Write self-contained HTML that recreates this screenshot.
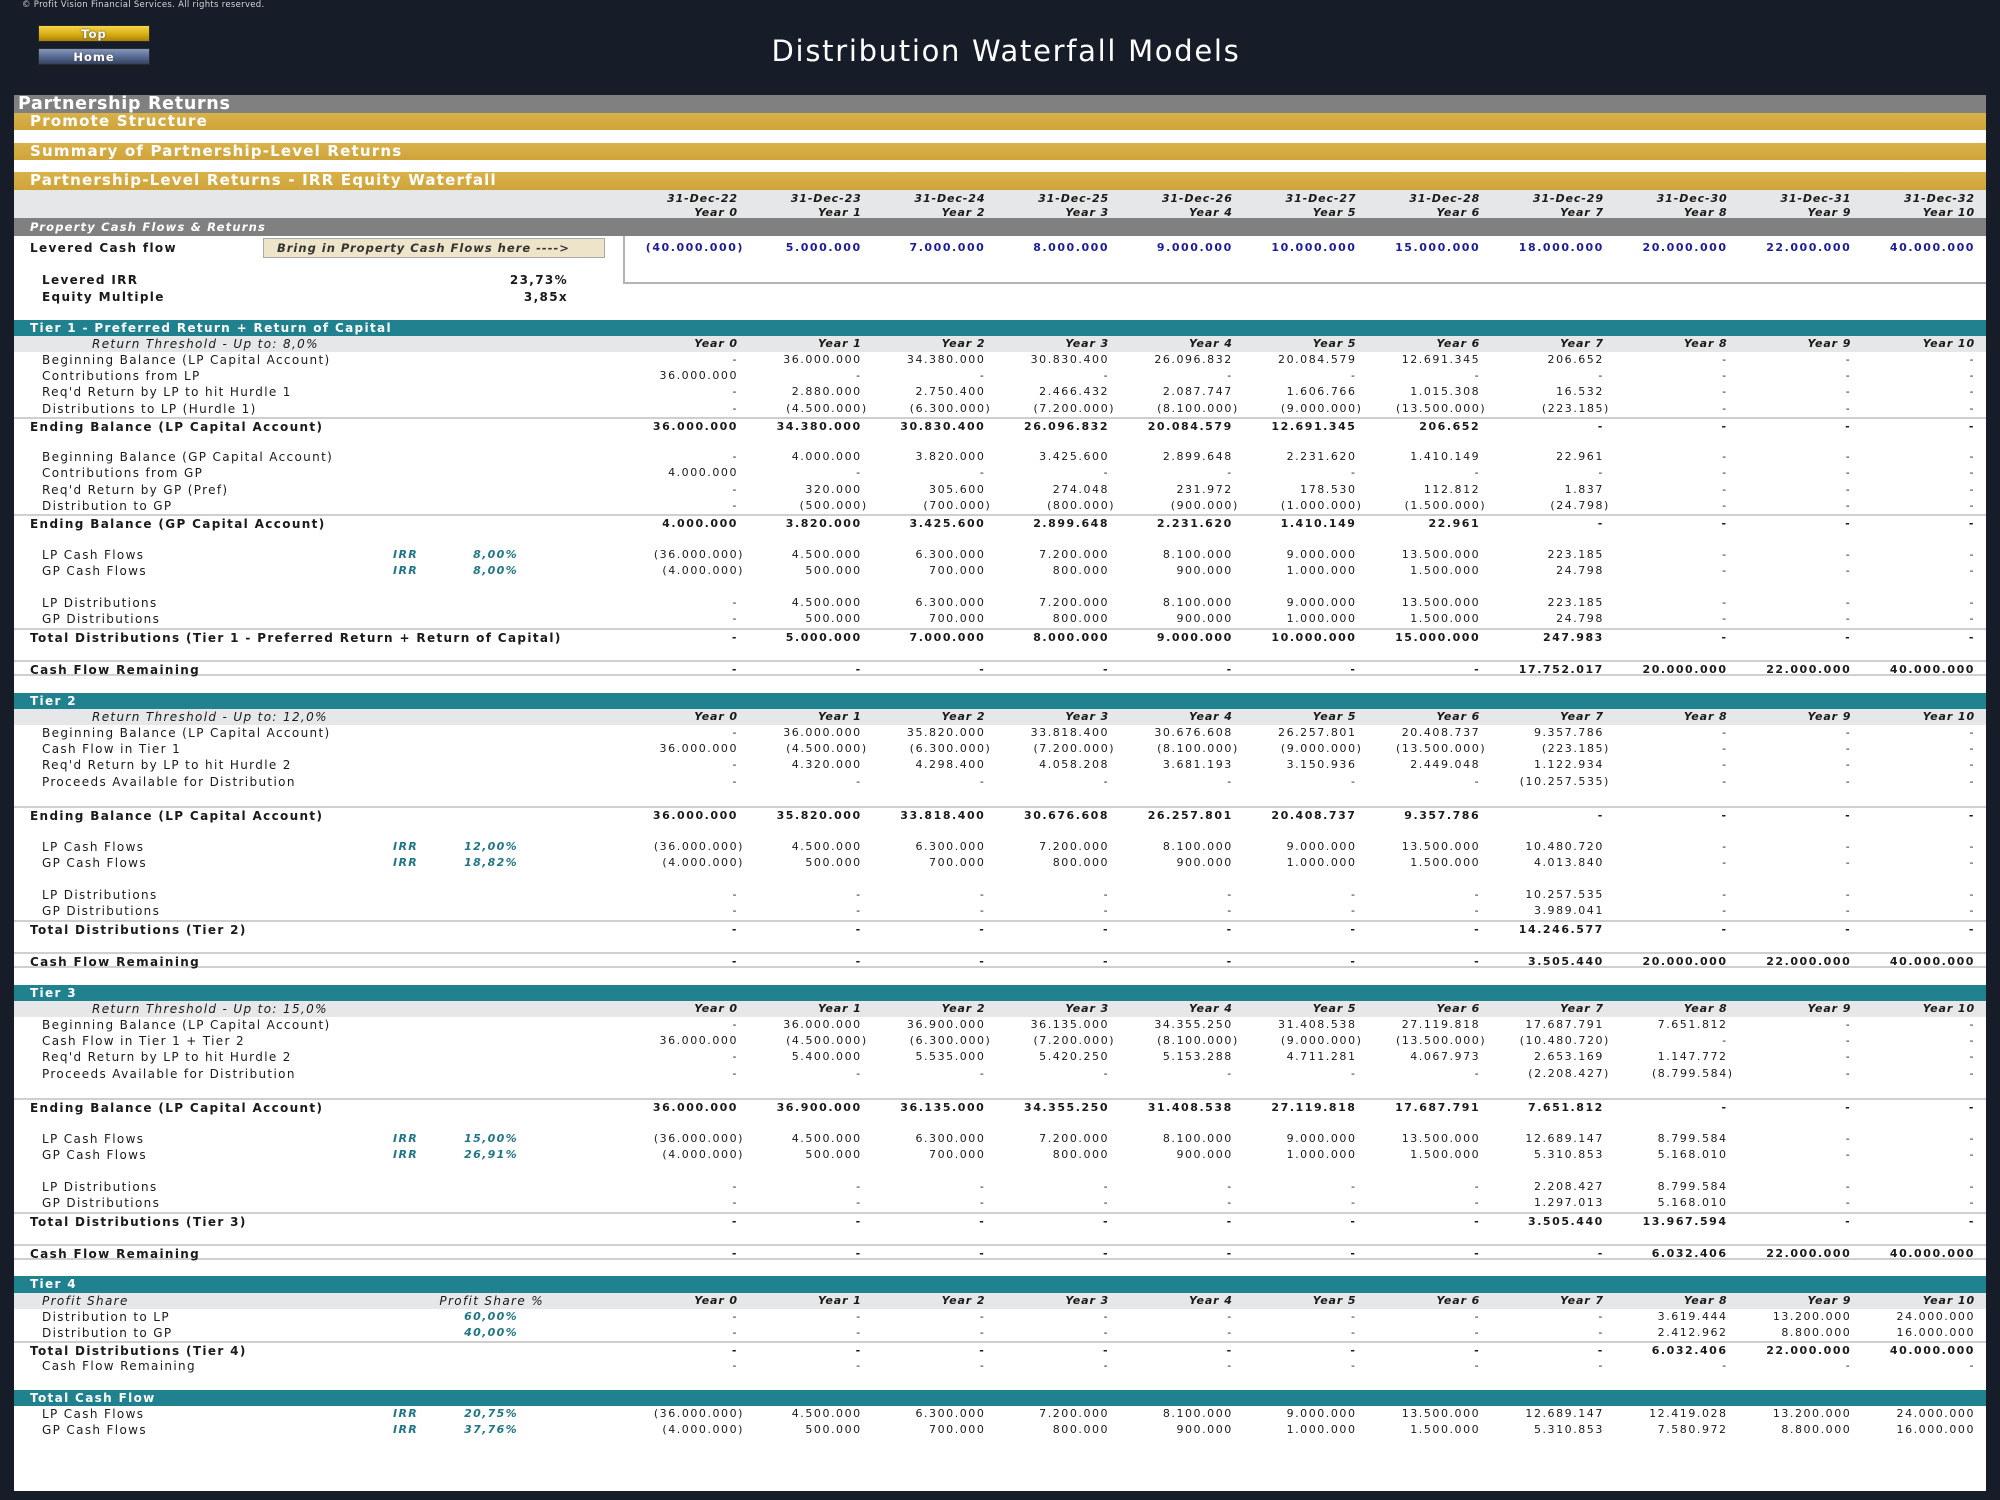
<!DOCTYPE html>
<html><head><meta charset="utf-8">
<style>
*{box-sizing:border-box;margin:0;padding:0}
html,body{width:2000px;height:1500px;overflow:hidden}
body{background:#161c28;font-family:"DejaVu Sans","Liberation Sans",sans-serif;position:relative}
.abs{position:absolute}
.copy{left:22px;top:0;font-size:8.5px;color:#d8d8d8;letter-spacing:.3px;line-height:11px}
.btn{left:38px;width:112px;height:17px;font-size:11.5px;font-weight:bold;color:#fff;text-align:center;line-height:17px;letter-spacing:1px;border:1px solid #2a2a2a;text-shadow:0 0 2px #444}
.top{top:25px;background:linear-gradient(#f5d54a,#d9ae12 55%,#a8820c)}
.home{top:48px;background:linear-gradient(#8497bd,#56688f 55%,#34425f)}
.title{left:0;width:2012px;top:33px;text-align:center;color:#fff;font-size:29px;letter-spacing:1.7px;line-height:36px}
.white{left:14px;top:95px;width:1972px;height:1396px;background:#fff}
.gbar{left:14px;width:1972px;background:#808080;color:#fff;font-weight:bold}
.gold{left:14px;width:1972px;height:17px;background:linear-gradient(#d9b24a,#cfa43a);color:#fff;font-weight:bold;font-size:15px;letter-spacing:1.2px;line-height:17px;padding-left:16px}
.lg{background:#e6e7e8}
.r{position:absolute;left:14px;width:1972px;height:16.3px;font-size:12px;line-height:16px;color:#1a1a1a;letter-spacing:1.35px;white-space:nowrap}
.r .l{position:absolute;top:0}
.r .c{position:absolute;top:0;width:124px;text-align:right;letter-spacing:1.55px;font-size:11px}
.bar{background:#20818f;color:#fff;font-weight:bold}
.th{background:#e6e7e8}
.th .c,.hd .c{font-style:italic;font-weight:bold;letter-spacing:.9px}
.it{font-style:italic}
.b{font-weight:bold}
.bt{border-top:2px solid #cfcfcf}
.bb{border-bottom:2px solid #cfcfcf}
.irr{color:#1f7585;font-style:italic;font-weight:bold;font-size:11px}
.blue .c{color:#1c1c9a;font-weight:bold}
</style></head><body>
<div class="abs copy">© Profit Vision Financial Services. All rights reserved.</div>
<div class="abs btn top">Top</div>
<div class="abs btn home">Home</div>
<div class="abs title">Distribution Waterfall Models</div>
<div class="abs white"></div>
<div class="abs gbar" style="top:95px;height:18px;font-size:17.5px;line-height:18px;padding-left:4px;letter-spacing:.7px">Partnership Returns</div>
<div class="abs gold" style="top:113px">Promote Structure</div>
<div class="abs gold" style="top:143px">Summary of Partnership-Level Returns</div>
<div class="abs gold" style="top:172px;height:18px">Partnership-Level Returns - IRR Equity Waterfall</div>
<div class="abs lg" style="left:14px;top:190px;width:1972px;height:28px"></div>
<div class="abs gbar" style="top:218px;height:18px;font-size:11.5px;line-height:18px;padding-left:16px;font-style:italic;letter-spacing:1.2px">Property Cash Flows &amp; Returns</div>
<div class="abs" style="left:623px;top:236px;width:1363px;height:48px;border-left:2px solid #b4b4b4;border-bottom:2px solid #b4b4b4"></div>
<div class="abs" style="left:263px;top:238px;width:342px;height:20px;background:#ede4c9;border:1px solid #a9a9a9;font-size:11.5px;font-style:italic;font-weight:bold;color:#333;line-height:18px;padding-left:13px;letter-spacing:1px">Bring in Property Cash Flows here ----&gt;</div>
<div id="rows"></div>
<script>
var R=document.getElementById('rows');
function esc(s){return s.replace(/&/g,'&amp;')}
function cellsHTML(v){var h='';if(!v)return h;for(var k=0;k<v.length;k++){var t=v[k];if(t===''||t==null)continue;var right=744+123.7*k-14;var paren=t.charAt(0)=='(';var pr=paren?0:6;h+='<div class="c" style="left:'+(right-124).toFixed(1)+'px;padding-right:'+pr+'px">'+t+'</div>'}return h}
function add(top,cls,labels,vals){var d=document.createElement('div');d.className='r '+(cls||'');d.style.top=top+'px';var h='';(labels||[]).forEach(function(L){var st=L[2]?'style="left:'+L[1]+'px;'+L[2]+'"':'style="left:'+L[1]+'px"';h+='<div class="l '+(L[3]||'')+'" '+st+'>'+esc(L[0])+'</div>'});h+=cellsHTML(vals);d.innerHTML=h;R.appendChild(d);return d}
var yrs=[],dts=[];for(var i=0;i<=10;i++){yrs.push('Year '+i);dts.push('31-Dec-'+(22+i))}
add(191,'hd',[],dts).style.height='15px';
add(205,'hd',[],yrs);
add(240,'blue b',[['Levered Cash flow',16]],['(40.000.000)','5.000.000','7.000.000','8.000.000','9.000.000','10.000.000','15.000.000','18.000.000','20.000.000','22.000.000','40.000.000']);
add(272,'b',[['Levered IRR',28],['23,73%',0,'width:554px;text-align:right']]);
add(289,'b',[['Equity Multiple',28],['3,85x',0,'width:554px;text-align:right']]);
var Y0=319.5,H=16.22;
function y(i){return +(Y0+i*H).toFixed(2)}
var D='-';
function dash(n){var a=[];for(var i=0;i<n;i++)a.push(D);return a}
function bar(i,t){add(y(i),'bar',[[t,16]])}
function th(i,t){add(y(i),'th',[[t,78,'','it']],yrs)}
function n(i,t,v,cls){add(y(i),cls||'',[[t,28]],v)}
function b(i,t,v,cls){add(y(i),'b '+(cls||'bt'),[[t,16]],v)}
function irr(i,t,p,v){add(y(i),'',[[t,28],['IRR',379,'','irr'],[p,0,'width:504px;text-align:right','irr']],v)}
var CF1=['(36.000.000)','4.500.000','6.300.000','7.200.000','8.100.000','9.000.000','13.500.000'];
var GF1=['(4.000.000)','500.000','700.000','800.000','900.000','1.000.000','1.500.000'];
var neg=['(4.500.000)','(6.300.000)','(7.200.000)','(8.100.000)','(9.000.000)','(13.500.000)'];
bar(0,'Tier 1 - Preferred Return + Return of Capital');
th(1,'Return Threshold - Up to:  8,0%');
n(2,'Beginning Balance (LP Capital Account)',[D,'36.000.000','34.380.000','30.830.400','26.096.832','20.084.579','12.691.345','206.652',D,D,D]);
n(3,'Contributions from LP',['36.000.000'].concat(dash(10)));
n(4,"Req'd Return by LP to hit Hurdle 1",[D,'2.880.000','2.750.400','2.466.432','2.087.747','1.606.766','1.015.308','16.532',D,D,D]);
n(5,'Distributions to LP (Hurdle 1)',[D].concat(neg,['(223.185)',D,D,D]));
b(6,'Ending Balance (LP Capital Account)',['36.000.000','34.380.000','30.830.400','26.096.832','20.084.579','12.691.345','206.652',D,D,D,D]);
n(8,'Beginning Balance (GP Capital Account)',[D,'4.000.000','3.820.000','3.425.600','2.899.648','2.231.620','1.410.149','22.961',D,D,D]);
n(9,'Contributions from GP',['4.000.000'].concat(dash(10)));
n(10,"Req'd Return by GP (Pref)",[D,'320.000','305.600','274.048','231.972','178.530','112.812','1.837',D,D,D]);
n(11,'Distribution to GP',[D,'(500.000)','(700.000)','(800.000)','(900.000)','(1.000.000)','(1.500.000)','(24.798)',D,D,D]);
b(12,'Ending Balance (GP Capital Account)',['4.000.000','3.820.000','3.425.600','2.899.648','2.231.620','1.410.149','22.961',D,D,D,D]);
irr(14,'LP Cash Flows','8,00%',CF1.concat(['223.185',D,D,D]));
irr(15,'GP Cash Flows','8,00%',GF1.concat(['24.798',D,D,D]));
n(17,'LP Distributions',[D].concat(CF1.slice(1),['223.185',D,D,D]));
n(18,'GP Distributions',[D].concat(GF1.slice(1),['24.798',D,D,D]));
b(19,'Total Distributions (Tier 1 - Preferred Return + Return of Capital)',[D,'5.000.000','7.000.000','8.000.000','9.000.000','10.000.000','15.000.000','247.983',D,D,D]);
b(21,'Cash Flow Remaining',dash(7).concat(['17.752.017','20.000.000','22.000.000','40.000.000']),'bt bb');
bar(23,'Tier 2');
th(24,'Return Threshold - Up to:  12,0%');
n(25,'Beginning Balance (LP Capital Account)',[D,'36.000.000','35.820.000','33.818.400','30.676.608','26.257.801','20.408.737','9.357.786',D,D,D]);
n(26,'Cash Flow in Tier 1',['36.000.000'].concat(neg,['(223.185)',D,D,D]));
n(27,"Req'd Return by LP to hit Hurdle 2",[D,'4.320.000','4.298.400','4.058.208','3.681.193','3.150.936','2.449.048','1.122.934',D,D,D]);
n(28,'Proceeds Available for Distribution',dash(7).concat(['(10.257.535)',D,D,D]));
b(30,'Ending Balance (LP Capital Account)',['36.000.000','35.820.000','33.818.400','30.676.608','26.257.801','20.408.737','9.357.786',D,D,D,D]);
irr(32,'LP Cash Flows','12,00%',CF1.concat(['10.480.720',D,D,D]));
irr(33,'GP Cash Flows','18,82%',GF1.concat(['4.013.840',D,D,D]));
n(35,'LP Distributions',dash(7).concat(['10.257.535',D,D,D]));
n(36,'GP Distributions',dash(7).concat(['3.989.041',D,D,D]));
b(37,'Total Distributions (Tier 2)',dash(7).concat(['14.246.577',D,D,D]));
b(39,'Cash Flow Remaining',dash(7).concat(['3.505.440','20.000.000','22.000.000','40.000.000']),'bt bb');
bar(41,'Tier 3');
th(42,'Return Threshold - Up to:  15,0%');
n(43,'Beginning Balance (LP Capital Account)',[D,'36.000.000','36.900.000','36.135.000','34.355.250','31.408.538','27.119.818','17.687.791','7.651.812',D,D]);
n(44,'Cash Flow in Tier 1 + Tier 2',['36.000.000'].concat(neg,['(10.480.720)',D,D,D]));
n(45,"Req'd Return by LP to hit Hurdle 2",[D,'5.400.000','5.535.000','5.420.250','5.153.288','4.711.281','4.067.973','2.653.169','1.147.772',D,D]);
n(46,'Proceeds Available for Distribution',dash(7).concat(['(2.208.427)','(8.799.584)',D,D]));
b(48,'Ending Balance (LP Capital Account)',['36.000.000','36.900.000','36.135.000','34.355.250','31.408.538','27.119.818','17.687.791','7.651.812',D,D,D]);
irr(50,'LP Cash Flows','15,00%',CF1.concat(['12.689.147','8.799.584',D,D]));
irr(51,'GP Cash Flows','26,91%',GF1.concat(['5.310.853','5.168.010',D,D]));
n(53,'LP Distributions',dash(7).concat(['2.208.427','8.799.584',D,D]));
n(54,'GP Distributions',dash(7).concat(['1.297.013','5.168.010',D,D]));
b(55,'Total Distributions (Tier 3)',dash(7).concat(['3.505.440','13.967.594',D,D]));
b(57,'Cash Flow Remaining',dash(8).concat(['6.032.406','22.000.000','40.000.000']),'bt bb');
bar(59,'Tier 4');
add(y(60),'th',[['Profit Share',28,'','it'],['Profit Share %',0,'width:530px;text-align:right','it']],yrs);
add(y(61),'',[['Distribution to LP',28],['60,00%',0,'width:504px;text-align:right','irr']],dash(8).concat(['3.619.444','13.200.000','24.000.000']));
add(y(62),'',[['Distribution to GP',28],['40,00%',0,'width:504px;text-align:right','irr']],dash(8).concat(['2.412.962','8.800.000','16.000.000']));
b(63,'Total Distributions (Tier 4)',dash(8).concat(['6.032.406','22.000.000','40.000.000']));
n(64,'Cash Flow Remaining',dash(11));
bar(66,'Total Cash Flow');
irr(67,'LP Cash Flows','20,75%',CF1.concat(['12.689.147','12.419.028','13.200.000','24.000.000']));
irr(68,'GP Cash Flows','37,76%',GF1.concat(['5.310.853','7.580.972','8.800.000','16.000.000']));
</script>
</body></html>
